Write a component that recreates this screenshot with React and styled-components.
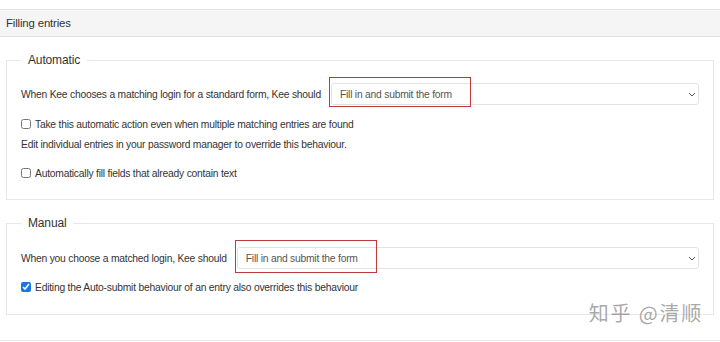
import React from "react";
import styled, { createGlobalStyle } from "styled-components";

const GlobalStyle = createGlobalStyle`
  html, body {
    margin: 0;
    padding: 0;
    background: #fff;
    font-family: "Liberation Sans", Arial, sans-serif;
    color: #333;
  }
`;

const Page = styled.div`
  position: relative;
  width: 720px;
  height: 342px;
  overflow: hidden;
  padding-top: 9px;
  box-sizing: border-box;
`;

const Header = styled.div`
  height: 26px;
  display: flex;
  align-items: center;
  padding-left: 6px;
  background: #f5f5f5;
  border-top: 1px solid #e3e3e3;
  border-bottom: 1px solid #e3e3e3;
  font-size: 11.4px;
  letter-spacing: -0.15px;
  color: #333;
`;

const Fieldset = styled.fieldset`
  margin: 15px 6px 0;
  padding: 0 14px ${p => p.$bottom}px;
  border: 1px solid #e8e8e8;
  min-width: 0;
`;

const Legend = styled.legend`
  margin-left: 0;
  padding: 0 7px 0 7px;
  font-size: 12px;
  letter-spacing: -0.15px;
  line-height: 16px;
  color: #333;
`;

const SelectRow = styled.div`
  display: flex;
  align-items: center;
  height: 22px;
  margin-top: ${p => p.$top}px;
  font-size: 10.3px;
  letter-spacing: -0.22px;
`;

const Label = styled.span`
  white-space: nowrap;
  margin-right: ${p => p.$gap}px;
`;

const SelectWrap = styled.div`
  position: relative;
  flex: 1;
  height: 22px;
`;

const Select = styled.div`
  height: 100%;
  box-sizing: border-box;
  border: 1px solid #e2e2e2;
  border-radius: 3px;
  display: flex;
  align-items: center;
  justify-content: space-between;
  padding: 0 2px 0 8px;
  color: #555;
  background: #fff;
`;

const Highlight = styled.div`
  position: absolute;
  left: -2px;
  top: ${p => p.$top}px;
  bottom: ${p => p.$bottom}px;
  width: 140px;
  border: 1px solid #c0393b;
  pointer-events: none;
`;

const Line = styled.div`
  display: flex;
  align-items: center;
  height: 16px;
  margin-top: ${p => p.$top}px;
  font-size: 10.3px;
  letter-spacing: -0.22px;
  color: #333;
  white-space: nowrap;
`;

const Check = styled.input.attrs({ type: "checkbox", readOnly: true })`
  width: 10px;
  height: 10px;
  margin: 0 4px 0 0;
  accent-color: #1a73e8;
`;

const BottomRule = styled.div`
  margin-top: 25px;
  border-top: 1px solid #e8e8e8;
`;

const Watermark = styled.div`
  position: absolute;
  right: 17px;
  top: 298px;
  font-family: "Noto Sans CJK SC", sans-serif;
  font-size: 20px;
  color: rgba(130, 130, 130, 0.7);
  letter-spacing: 1.8px;
`;

const Chevron = () => (
  <svg width="8" height="5" viewBox="0 0 8 5">
    <path d="M1 1l3 3 3-3" fill="none" stroke="#555" strokeWidth="1" />
  </svg>
);

function Dropdown({ hlTop, hlBottom }) {
  return (
    <SelectWrap>
      <Select>
        <span>Fill in and submit the form</span>
        <Chevron />
      </Select>
      <Highlight $top={hlTop} $bottom={hlBottom} />
    </SelectWrap>
  );
}

export default function App() {
  return (
    <Page>
      <GlobalStyle />
      <Header>Filling entries</Header>

      <Fieldset $bottom={18}>
        <Legend>Automatic</Legend>
        <SelectRow $top={15}>
          <Label $gap={10}>
            When Kee chooses a matching login for a standard form, Kee should
          </Label>
          <Dropdown hlTop={-6} hlBottom={-2} />
        </SelectRow>
        <Line $top={11}>
          <Check />
          Take this automatic action even when multiple matching entries are
          found
        </Line>
        <Line $top={4}>
          Edit individual entries in your password manager to override this
          behaviour.
        </Line>
        <Line $top={13}>
          <Check />
          Automatically fill fields that already contain text
        </Line>
      </Fieldset>

      <Fieldset $bottom={19}>
        <Legend>Manual</Legend>
        <SelectRow $top={16}>
          <Label $gap={10}>When you choose a matched login, Kee should</Label>
          <Dropdown hlTop={-7} hlBottom={-4} />
        </SelectRow>
        <Line $top={10}>
          <Check checked />
          Editing the Auto-submit behaviour of an entry also overrides this
          behaviour
        </Line>
      </Fieldset>

      <BottomRule />
      <Watermark>知乎 @清顺</Watermark>
    </Page>
  );
}
